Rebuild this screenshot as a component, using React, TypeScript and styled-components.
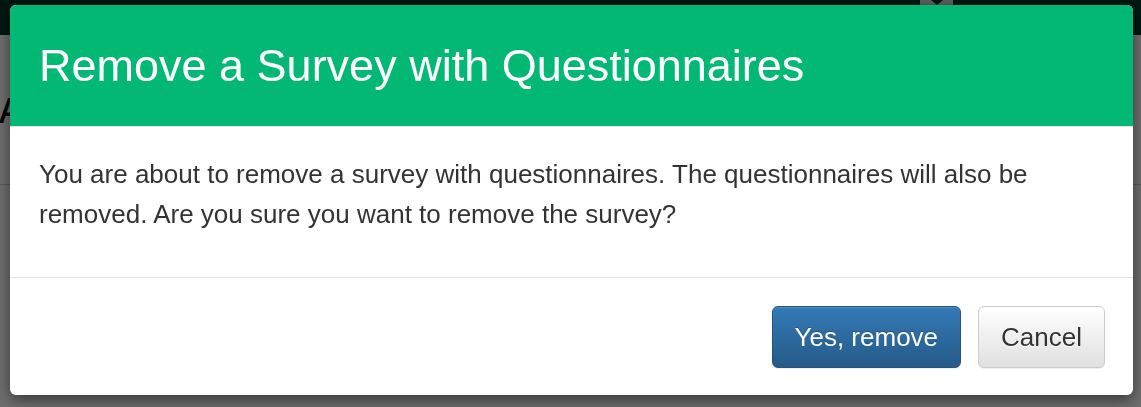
import styled, { createGlobalStyle } from "styled-components";

const GlobalStyle = createGlobalStyle`
  html, body {
    margin: 0;
    padding: 0;
    height: 100%;
    overflow: hidden;
  }
  body {
    font-family: "Liberation Sans", Arial, Helvetica, sans-serif;
    background: #ffffff;
    color: #333333;
  }
  * {
    box-sizing: border-box;
  }
`;

const App = (): JSX.Element => {
  return (
    <>
      <GlobalStyle />
      <Page>
        <NavBar>
          <NavToggle>
            <Caret />
          </NavToggle>
        </NavBar>
        <PageHeader>
          <h1>All surveys</h1>
        </PageHeader>
      </Page>
      <Backdrop />
      <Dialog role="dialog" aria-modal="true">
        <Header>
          <Title>Remove a Survey with Questionnaires</Title>
        </Header>
        <Body>
          <p>
            You are about to remove a survey with questionnaires. The
            questionnaires will also be removed. Are you sure you want to
            remove the survey?
          </p>
        </Body>
        <Footer>
          <Button variant="primary">Yes, remove</Button>
          <Button variant="default">Cancel</Button>
        </Footer>
      </Dialog>
    </>
  );
};

export default App;

const Page = styled.div`
  display: flex;
  flex-direction: column;
  height: 100vh;
`;

const NavBar = styled.div`
  height: 35px;
  background: #02372a;
  display: flex;
  justify-content: flex-end;
  padding-right: 188px;
`;

const NavToggle = styled.div`
  width: 33px;
  height: 6px;
  background: #d8d8d8;
  display: flex;
  justify-content: center;
`;

const Caret = styled.span`
  width: 0;
  height: 0;
  border-left: 6px solid transparent;
  border-right: 6px solid transparent;
  border-top: 5px solid #02372a;
`;

const PageHeader = styled.div`
  height: 150px;
  border-bottom: 1px solid #cfcfcf;
  display: flex;
  align-items: center;

  h1 {
    margin: 0 0 0 -1px;
    font-family: "Open Sans", sans-serif;
    font-size: 34px;
    font-weight: 600;
    color: #111;
  }
`;

const Backdrop = styled.div`
  position: fixed;
  inset: 0;
  background: rgba(0, 0, 0, 0.57);
`;

const Dialog = styled.div`
  position: fixed;
  top: 5px;
  left: 10px;
  width: 1123px;
  background: #ffffff;
  border-radius: 6px;
  box-shadow: 0 5px 15px rgba(0, 0, 0, 0.5);
  display: flex;
  flex-direction: column;
  overflow: hidden;
`;

const Header = styled.div`
  background: #02b874;
  height: 122px;
  padding: 0 29px;
  display: flex;
  align-items: center;
  border-bottom: 1px solid #e5e5e5;
`;

const Title = styled.h4`
  margin: 0;
  font-size: 45px;
  font-weight: 400;
  line-height: 1.1;
  color: #ffffff;
`;

const Body = styled.div`
  padding: 27px 29px 43px;
  border-bottom: 1px solid #e5e5e5;

  p {
    margin: 0;
    font-size: 26px;
    line-height: 40px;
    color: #333333;
  }
`;

const Footer = styled.div`
  display: flex;
  justify-content: flex-end;
  gap: 17px;
  padding: 28px 28px 27px;
`;

const Button = styled.button<{ variant: "primary" | "default" }>`
  height: 62px;
  padding: 0 22px;
  font-family: "Liberation Sans", Arial, sans-serif;
  font-size: 26px;
  border-radius: 6px;
  cursor: pointer;
  border: 1px solid;
  ${(p) =>
    p.variant === "primary"
      ? `
    color: #ffffff;
    background-image: linear-gradient(to bottom, #337ab7 0%, #265a88 100%);
    border-color: #245580;
    text-shadow: 0 -1px 0 rgba(0, 0, 0, 0.2);
    box-shadow: inset 0 1px 0 rgba(255, 255, 255, 0.15), 0 1px 1px rgba(0, 0, 0, 0.075);
  `
      : `
    color: #333333;
    background-image: linear-gradient(to bottom, #ffffff 0%, #e0e0e0 100%);
    border-color: #cccccc;
    text-shadow: 0 1px 0 #ffffff;
    box-shadow: inset 0 1px 0 rgba(255, 255, 255, 0.15), 0 1px 1px rgba(0, 0, 0, 0.075);
  `}
`;
